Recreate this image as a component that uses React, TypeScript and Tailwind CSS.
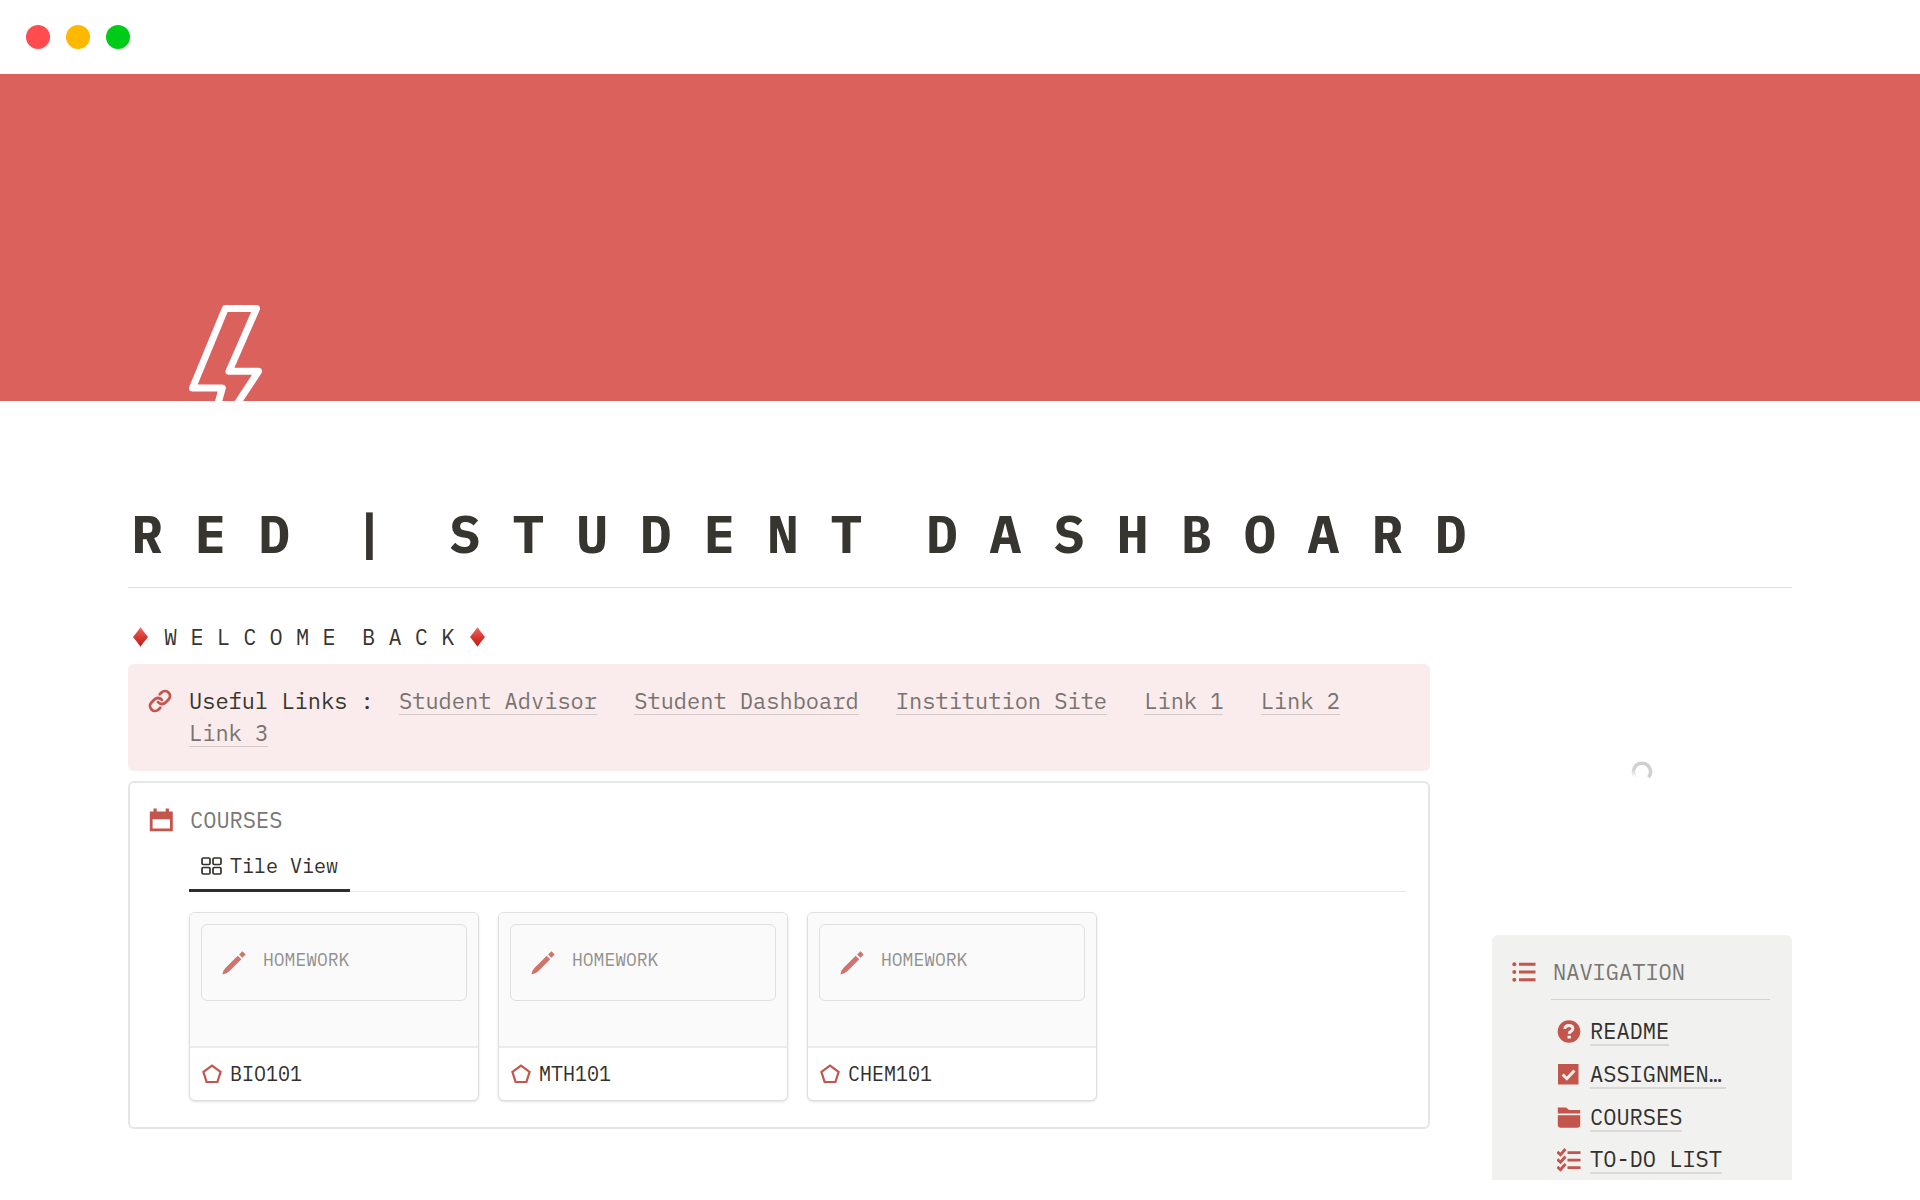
import React from 'react';

const links = ['Student Advisor', 'Student Dashboard', 'Institution Site', 'Link 1', 'Link 2', 'Link 3'];

const courses = ['BIO101', 'MTH101', 'CHEM101'];

const BoltIcon = () => (
  <svg viewBox="0 0 80 160" className="w-20 h-40" fill="none" stroke="#fff" strokeWidth="7" strokeLinejoin="round" aria-hidden="true">
    <path d="M41.300 8.500H72.500L45 71.300H74.500L20 154L38.300 88H8.500Z" />
  </svg>
);

const DiamondIcon = () => (
  <svg viewBox="0 0 15 20" className="w-[15px] h-5" aria-hidden="true">
    <defs>
      <linearGradient id="diamond" x1="0" y1="0" x2="0" y2="1">
        <stop offset="0" stopColor="#f0675f" />
        <stop offset="0.5" stopColor="#d93a33" />
        <stop offset="1" stopColor="#b81d14" />
      </linearGradient>
    </defs>
    <path d="M7.500 .3Q11.200 5.500 15 10Q11.200 14.500 7.500 19.700Q3.800 14.500 0 10Q3.800 5.500 7.500 .3Z" fill="url(#diamond)" />
  </svg>
);

const LinkIcon = () => (
  <svg viewBox="0 0 24 24" className="w-6 h-6 shrink-0" fill="none" stroke="#c4554d" strokeWidth="2.800" strokeLinecap="round" aria-hidden="true">
    <path d="M10 13a5 5 0 0 0 7.540.540l3-3a5 5 0 0 0-7.070-7.070l-1.720 1.710" />
    <path d="M14 11a5 5 0 0 0-7.540-.540l-3 3a5 5 0 0 0 7.070 7.070l1.710-1.710" />
  </svg>
);

const CalendarIcon = () => (
  <svg viewBox="0 0 24 24" className="w-6 h-6 shrink-0" fill="#c4554d" aria-hidden="true">
    <path fillRule="evenodd" d="M.8 3.500H4.500V.5H7.700V3.500H16.700V.5H19.900V3.500H23.800V23.200H.8ZM3.600 11.200V20.400H21V11.200Z" />
  </svg>
);

const GalleryIcon = () => (
  <svg viewBox="0 0 21 18" className="w-[21px] h-[18px]" fill="none" stroke="#32302c" strokeWidth="1.700" aria-hidden="true">
    <rect x="1" y="1" width="8" height="6.500" rx="1.300" />
    <rect x="12" y="1" width="8" height="6.500" rx="1.300" />
    <rect x="1" y="10.500" width="8" height="6.500" rx="1.300" />
    <rect x="12" y="10.500" width="8" height="6.500" rx="1.300" />
  </svg>
);

const PencilIcon = () => (
  <svg viewBox="0 0 24 24" className="w-6 h-6 shrink-0" fill="#d0736c" aria-hidden="true">
    <path d="M20.400 .2L23.700 3.500L20.400 6.800L17.100 3.500Z" />
    <path d="M15.700 4.700L19.300 8.300L7 20.600Q5 22.700 .4 23.500Q1.200 19 3.400 17Z" />
  </svg>
);

const PentagonIcon = () => (
  <svg viewBox="0 0 20 20" className="w-5 h-5 shrink-0" fill="none" stroke="#c4554d" strokeWidth="2.200" aria-hidden="true">
    <path d="M10 1.600L18.600 7.900L15.400 18H4.600L1.400 7.900Z" />
  </svg>
);

const ListIcon = () => (
  <svg viewBox="0 0 24 24" className="w-6 h-6 shrink-0" fill="#c4554d" aria-hidden="true">
    <circle cx="2.300" cy="4.300" r="2" />
    <circle cx="2.300" cy="12" r="2" />
    <circle cx="2.300" cy="19.700" r="2" />
    <path d="M7 2.800H23.500V5.800H7ZM7 10.500H23.500V13.500H7ZM7 18.200H23.500V21.200H7Z" />
  </svg>
);

const HelpIcon = () => (
  <svg viewBox="0 0 24 24" className="w-6 h-6 shrink-0" aria-hidden="true">
    <circle cx="12" cy="11.500" r="11.300" fill="#c4554d" />
    <path d="M7.800 8.900Q8 5.500 12 5.500Q15.900 5.500 15.900 8.600Q15.900 10.300 13.800 11.400Q12.200 12.200 12.200 14" fill="none" stroke="#f1f1ef" strokeWidth="2.900" />
    <path d="M10.500 15.700H13.900V18.500H10.500Z" fill="#f1f1ef" />
  </svg>
);

const CheckboxIcon = () => (
  <svg viewBox="0 0 24 24" className="w-6 h-6 shrink-0" aria-hidden="true">
    <path d="M1 1H21.500V21.500H1Z" fill="#c4554d" />
    <path d="M5.600 11.500L9.800 15.700L17.400 7.500" fill="none" stroke="#f1f1ef" strokeWidth="3" />
  </svg>
);

const FolderIcon = () => (
  <svg viewBox="0 0 24 24" className="w-6 h-6 shrink-0" fill="#c4554d" aria-hidden="true">
    <path d="M.8 7.500V1.500H8.500Q9.500 1.500 10.500 2.700Q11.500 4 12.800 4H23.200V7.500Z" />
    <path d="M.8 9.300H23.200V18.800Q23.200 21.700 20.300 21.700H3.700Q.8 21.700 .8 18.800Z" />
  </svg>
);

const ChecklistIcon = () => (
  <svg viewBox="0 0 24 24" className="w-6 h-6 shrink-0" fill="none" stroke="#c4554d" aria-hidden="true">
    <path d="M.3 3.800L3.500 6.700L8.500 1M.3 11.300L3.500 14.200L8.500 8.500M.3 18.800L3.500 21.700L8.500 16" strokeWidth="2.900" />
    <path d="M10.500 4.600H23.500M10.500 12.100H23.500M10.500 19.600H23.500" strokeWidth="2.800" />
  </svg>
);

const Spinner = () => (
  <svg viewBox="0 0 22 22" className="w-[22px] h-[22px]" fill="none" role="status" aria-label="Loading">
    <defs>
      <linearGradient id="fade" x1="0" y1="0" x2="0" y2="1">
        <stop offset="0.400" stopColor="#d0d0cf" />
        <stop offset="1" stopColor="#d0d0cf" stopOpacity="0" />
      </linearGradient>
    </defs>
    <path d="M11 2.300A8.500 8.500 0 0 0 5 16.800" stroke="url(#fade)" strokeWidth="3.500" />
    <path d="M11 2.300A8.500 8.500 0 0 1 17.500 16.300" stroke="#d0d0cf" strokeWidth="3.500" />
  </svg>
);

const navItems = [
  { label: 'README', icon: HelpIcon },
  { label: 'ASSIGNMEN…', icon: CheckboxIcon, padding: 'pr-1' },
  { label: 'COURSES', icon: FolderIcon },
  { label: 'TO-DO LIST', icon: ChecklistIcon },
];

const CourseCard: React.FC<{ name: string }> = ({ name }) => (
  <a href="#" className="block w-[290px] rounded-md border border-[#dfdfde] bg-white shadow-sm overflow-hidden">
    <div className="h-[135px] bg-[#fafafa] border-b-2 border-[#ececeb] px-[11px] pt-[11px]">
      <div className="flex h-[77px] gap-[17px] rounded-md border border-[#dfdfde] pl-5 pt-[26px]">
        <PencilIcon />
        <span className="text-[18px] leading-6 -mt-[3px] text-[#92918e]">HOMEWORK</span>
      </div>
    </div>
    <div className="flex items-center gap-2 h-[52px] pl-3 text-[20px] leading-6 text-[#32302c]">
      <PentagonIcon />
      <span>{name}</span>
    </div>
  </a>
);

const App: React.FC = () => {
  return (
    <div className="min-h-screen bg-white text-[#37352f] font-['IBM_Plex_Mono','Liberation_Mono',monospace]">
      {/* Window bar */}
      <header className="flex items-center gap-4 h-[74px] px-[26px]">
        <span className="w-6 h-6 rounded-full bg-[#ff4d4f]" />
        <span className="w-6 h-6 rounded-full bg-[#ffb800]" />
        <span className="w-6 h-6 rounded-full bg-[#00cc18]" />
      </header>

      {/* Cover with page icon */}
      <div className="h-[327px] bg-[#db615d] overflow-hidden pl-[184px] pt-[226px]">
        <BoltIcon />
      </div>

      <div className="px-32">
        <h1 className="mt-[99px] pl-[3px] pb-[19px] border-b border-[#dededd] text-[53px] leading-[68px] font-bold whitespace-pre">
          {'R E D  |  S T U D E N T  D A S H B O A R D'}
        </h1>

        <div className="flex gap-[62px]">
          <main className="flex-1 min-w-0">
            <h2 className="flex items-center gap-4 mt-[33px] pl-[5px] text-[22px] leading-8 whitespace-pre">
              <DiamondIcon />
              {'W E L C O M E  B A C K'}
              <DiamondIcon />
            </h2>

            <section className="flex gap-[17px] mt-[11px] rounded-md bg-[#faecec] pl-5 pr-6 pt-[21px] pb-[22px] text-[22px] leading-8">
              <div className="pt-1">
                <LinkIcon />
              </div>
              <p>
                <span className="mr-3">Useful Links :</span>{' '}
                {links.map((link) => (
                  <React.Fragment key={link}>
                    <a href="#" className="inline-block h-[30px] mb-[2px] align-top border-b border-[#d5caca] mr-6 whitespace-nowrap text-[#787370]">
                      {link}
                    </a>{' '}
                  </React.Fragment>
                ))}
              </p>
            </section>

            <section className="mt-[10px] rounded-md border-2 border-[#e6e6e5] pl-[19px] pr-[22px] pt-[21px] pb-[26px]">
              <div className="flex items-center gap-[17px]">
                <CalendarIcon />
                <h3 className="text-[22px] leading-8 text-[#787774]">COURSES</h3>
              </div>
              <div className="pl-10">
                <div role="tablist" className="flex border-b border-[#e9e9e7] mt-[10px]">
                  <button role="tab" aria-selected="true" className="flex items-center gap-2 -mb-px px-3 pt-2 pb-[11px] border-b-[3px] border-[#2f2d29] text-[20px] leading-6 text-[#32302c]">
                    <GalleryIcon />
                    Tile View
                  </button>
                </div>
                <div className="flex flex-wrap gap-[19px] mt-5">
                  {courses.map((course) => (
                    <CourseCard key={course} name={course} />
                  ))}
                </div>
              </div>
            </section>
          </main>

          <aside className="w-[300px] shrink-0">
            <div className="flex justify-center h-[347px] pt-[173px]">
              <Spinner />
            </div>
            <nav className="rounded-t-md bg-[#f1f1ef] pl-5 pr-[22px] pt-[21px] text-[22px]">
              <div className="flex items-center gap-[17px]">
                <ListIcon />
                <h3 className="leading-8 text-[#787774]">NAVIGATION</h3>
              </div>
              <div className="ml-[39px] border-t border-[#d3d3d1] mt-[11px] pt-[10px]">
                {navItems.map(({ label, icon: Icon, padding }) => (
                  <div key={label} className="flex items-center gap-[9px] h-[43px] last:h-[41px] pl-[6px]">
                    <Icon />
                    <a href="#" className={`leading-[27px] border-b-2 border-[#d9d9d7] text-[#32302c] ${padding ?? ''}`}>
                      {label}
                    </a>
                  </div>
                ))}
              </div>
            </nav>
          </aside>
        </div>
      </div>
    </div>
  );
};

export default App;
